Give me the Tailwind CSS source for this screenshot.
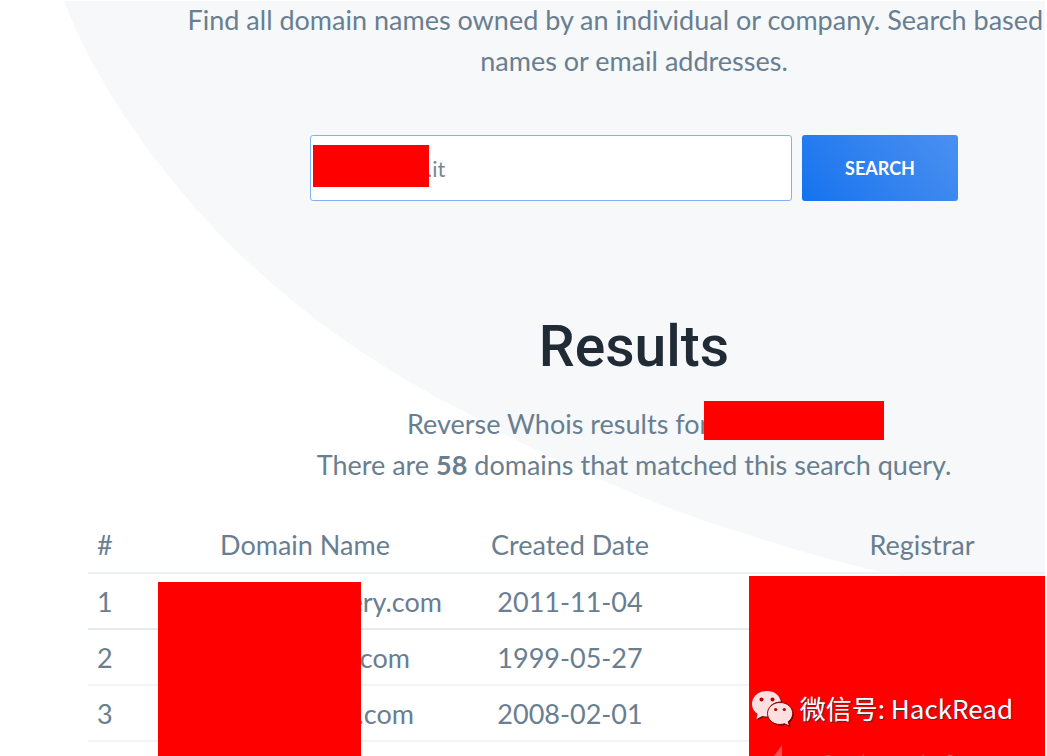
<!DOCTYPE html>
<html lang="en">
<head>
  <meta charset="UTF-8">
  <meta name="viewport" content="width=device-width, initial-scale=1.0">
  <title>Reverse Whois</title>
  <script src="https://cdn.jsdelivr.net/npm/@tailwindcss/browser@4"></script>
</head>
<body class="bg-white overflow-hidden">
  <div class="relative h-screen mr-0.5 overflow-hidden font-['Lato',sans-serif] text-[27px] leading-[41px] text-[#697e91]">
    <!-- curved backdrop -->
    <svg class="absolute left-0 top-px" width="1200" height="600" viewBox="0 1 1200 600" aria-hidden="true">
      <path fill="#f6f8fa" d="M64 0C88 68 147 162 235 250C300 312 370 364 467 413C525 447 585 474 647 499C675 511 710 523 740 532C785 547 830 560 873 570C920 580 980 590 1045 597L1200 600V0Z"/>
    </svg>

    <main class="relative ml-[88px] -mr-[135px] text-center">
      <p class="-mt-px">Find all domain names owned by an individual or company. Search based on<br>names or email addresses.</p>

      <form class="mt-[54px] flex justify-center gap-2.5" onsubmit="return false">
        <div class="relative w-[482px]">
          <input type="text" aria-label="Domain, name or email" value=".it" class="block w-full h-[66px] pl-[116px] pr-4 bg-white border border-[#7fb2f8] rounded-[3px] text-[22px] text-[#7b8794] outline-none">
          <span class="absolute left-[3px] top-[10px] w-[116px] h-[42px] bg-[#ff0000]"></span>
        </div>
        <button type="submit" class="w-[156px] h-[66px] rounded-[3px] bg-linear-50 from-[#1173ee] to-[#4a90f0] text-white text-[18px] font-bold">SEARCH</button>
      </form>

      <h2 class="mt-[110px] font-['Roboto',sans-serif] font-medium text-[57px] leading-[72px] text-[#212b36]">Results</h2>

      <p class="mt-5">
        <span class="relative inline-block w-[454px] text-left align-top">Reverse Whois results for
          <span class="absolute left-[297px] -top-[2px] w-[180px] h-[39px] bg-[#ff0000]"></span>
        </span><br>
        There are <b class="font-bold">58</b> domains that matched this search query.
      </p>

      <div class="relative mt-8">
        <table class="w-full table-fixed border-collapse">
          <thead>
            <tr class="h-14 border-b-2 border-[#eef1f4]">
              <th scope="col" class="w-[46px] pl-[9px] text-left font-normal">#</th>
              <th scope="col" class="w-[342px] font-normal">Domain Name</th>
              <th scope="col" class="w-[188px] font-normal">Created Date</th>
              <th scope="col" class="font-normal">Registrar</th>
            </tr>
          </thead>
          <tbody>
            <tr class="h-14 border-b-2 border-[#e6ebf0]">
              <td class="pl-[9px] text-left">1</td>
              <td><span class="inline-block w-[274px] text-right align-top">ery.com</span></td>
              <td>2011-11-04</td>
              <td></td>
            </tr>
            <tr class="h-14 border-b-2 border-[#f2f4f6]">
              <td class="pl-[9px] text-left">2</td>
              <td><span class="inline-block w-[210px] text-right align-top">.com</span></td>
              <td>1999-05-27</td>
              <td></td>
            </tr>
            <tr class="h-14 border-b-2 border-[#f2f4f6]">
              <td class="pl-[9px] text-left">3</td>
              <td><span class="inline-block w-[218px] text-right align-top">.com</span></td>
              <td>2008-02-01</td>
              <td></td>
            </tr>
          </tbody>
        </table>
        <!-- hidden columns -->
        <span class="absolute left-[70px] top-[65px] w-[203px] h-[220px] bg-[#ff0000]"></span>
        <span class="absolute left-[661px] right-0 top-[59px] h-[220px] bg-[#ff0000]"></span>
      </div>
    </main>

    <!-- watermark -->
    <div class="absolute right-[32px] bottom-[28px] flex items-center gap-[6px] text-white">
      <svg class="mt-0.5" width="42" height="36" viewBox="0 0 42 36" aria-hidden="true">
        <g fill="#5a0000" transform="translate(1 1)">
          <path d="M15 0C6.500 0 0 5.500 0 13c0 4.300 2 7.600 5.500 10L4.500 28l6-3c1.500.5 3 .6 5 .6h2C14 17 20 10.500 29 10.500C27.500 4 22 0 15 0Z"/>
          <path d="M28 11.500c-7 0-12.500 4.800-12.500 11S21 33.500 28 33.500c1.700 0 3.200-.3 4.500-.8l5 2.500-1.300-4.500c2.800-2 4.500-4.800 4.500-8.200 0-6.200-5.500-11-12.700-11Z"/>
        </g>
        <path fill="#ffdfdf" d="M15 0C6.500 0 0 5.500 0 13c0 4.300 2 7.600 5.500 10L4.500 28l6-3c1.500.5 3 .6 5 .6h2C14 17 20 10.500 29 10.500C27.500 4 22 0 15 0Z"/>
        <path fill="#ffdfdf" stroke="#900000" stroke-width="1" d="M28 11.500c-7 0-12.500 4.800-12.500 11S21 33.500 28 33.500c1.700 0 3.200-.3 4.500-.8l5 2.500-1.300-4.500c2.800-2 4.500-4.800 4.500-8.200 0-6.200-5.500-11-12.700-11Z"/>
        <g fill="#b80000">
          <circle cx="9.500" cy="8.500" r="2"/>
          <circle cx="20.500" cy="8.500" r="2"/>
          <circle cx="23.700" cy="18.500" r="1.600"/>
          <circle cx="32.300" cy="18.500" r="1.600"/>
        </g>
      </svg>
      <span class="font-['Noto_Sans_CJK_SC',sans-serif] text-[26px] leading-[40px] whitespace-nowrap [text-shadow:1px_1px_1px_#333]">微信号: HackRead</span>
    </div>
    <svg class="absolute left-[774px] bottom-0" width="190" height="11" viewBox="0 0 190 11" fill="#ffffff" fill-opacity=".3" aria-hidden="true">
      <path d="M0 11L8 0V11Z"/>
      <path d="M51 11q3-2 6 0ZM88 11l2-2v2ZM148 11l2-2v2ZM173 11q3-3 6 0Z"/>
    </svg>
  </div>
</body>
</html>
